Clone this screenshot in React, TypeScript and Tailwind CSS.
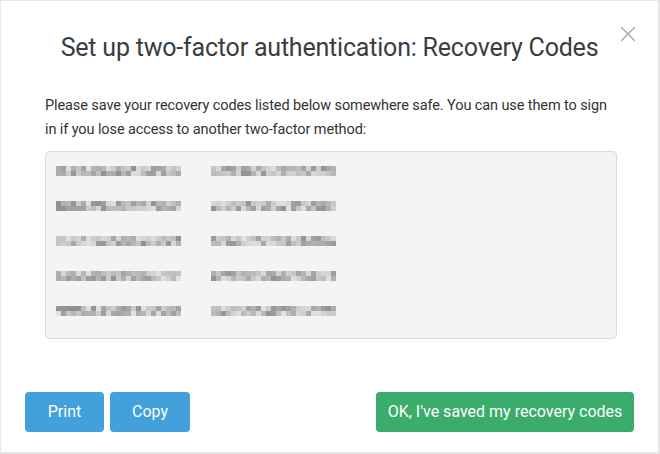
import { X } from 'lucide-react';

const FONT = 'Roboto, "Noto Sans", Arial, sans-serif';

// cheap seeded random so the blurred codes look the same every run
function makeRand(seed: number) {
  let s = seed;
  return () => {
    s = (s * 9301 + 49297) % 233280;
    return s / 233280;
  };
}

function BlurredCode({ seed, cols }: { readonly seed: number; readonly cols: number }) {
  const rand = makeRand(seed);
  const cells: { x: number; y: number; g: number }[] = [];
  for (let row = 0; row < 2; row++) {
    for (let col = 0; col < cols; col++) {
      const r = rand();
      cells.push({ x: col * 5, y: row * 5, g: Math.round(145 + r * 80) });
    }
  }
  return (
    <svg width={cols * 5} height={10} className="block">
      {cells.map((c, i) => (
        <rect key={i} x={c.x} y={c.y} width={5} height={5} fill={`rgb(${c.g},${c.g},${c.g})`} />
      ))}
    </svg>
  );
}

export default function App() {
  const rows = [0, 1, 2, 3, 4];

  return (
    <div
      className="relative flex h-[454px] w-[660px] flex-col border-t border-l border-r-2 border-b-2 border-[#e6e6e6] bg-white text-[#333]"
      style={{ fontFamily: FONT }}
    >
      <button className="absolute right-[17px] top-[20px] text-[#a8a8a8]">
        <X className="h-[26px] w-[26px]" strokeWidth={1.3} />
      </button>

      <h1 className="pt-[29px] text-center text-[25px] leading-[36px] tracking-[-0.2px] text-[#383d42]">
        Set up two-factor authentication: Recovery Codes
      </h1>

      <div className="mt-[28px] px-[44px]">
        <p className="text-[14.5px] leading-[24px] tracking-[-0.1px] text-[#333]">
          Please save your recovery codes listed below somewhere safe. You can use them to sign in if you lose access to another two-factor method:
        </p>
        <div className="mt-[9px] h-[188px] w-[572px] rounded-[4px] border border-[#dcdcdc] bg-[#f4f4f4] px-[10px] pt-[14px]">
          <div className="flex flex-col gap-[25px]">
            {rows.map((r) => (
              <div key={r} className="flex gap-[30px]">
                <BlurredCode seed={r * 17 + 3} cols={25} />
                <BlurredCode seed={r * 31 + 11} cols={25} />
              </div>
            ))}
          </div>
        </div>
      </div>

      <div className="mt-auto flex items-center px-[24px] pb-[20px]">
        <button className="h-[40px] w-[79px] rounded-[4px] bg-[#42a0da] text-[16px] text-white">Print</button>
        <button className="ml-[6px] h-[40px] w-[80px] rounded-[4px] bg-[#42a0da] text-[16px] text-white">Copy</button>
        <button className="ml-auto h-[40px] w-[258px] rounded-[4px] bg-[#3aad6c] text-[16px] text-white">
          OK, I've saved my recovery codes
        </button>
      </div>
    </div>
  );
}
